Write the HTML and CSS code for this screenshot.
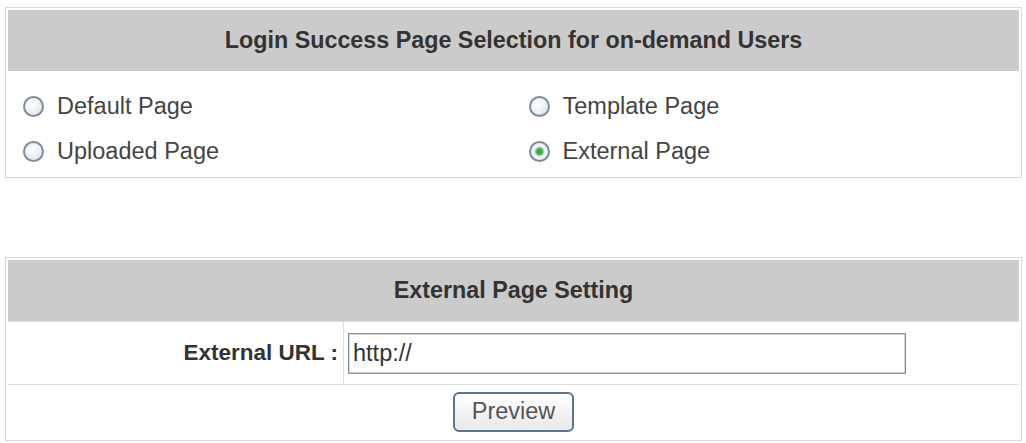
FILE: index.html
```html
<!DOCTYPE html>
<html>
<head>
    <title>Login Success Page</title>
    <link rel="stylesheet" href="styles.css">
</head>
<body>
    <div class="page">
        <div class="panel">
            <div class="panel-head">Login Success Page Selection for on-demand Users</div>
            <div class="choice-grid">
                <label class="choice"><input type="radio" name="successPage" class="radio">Default Page</label>
                <label class="choice"><input type="radio" name="successPage" class="radio">Template Page</label>
                <label class="choice"><input type="radio" name="successPage" class="radio">Uploaded Page</label>
                <label class="choice"><input type="radio" name="successPage" class="radio" checked>External Page</label>
            </div>
        </div>

        <div class="panel panel-gap">
            <div class="panel-head">External Page Setting</div>
            <div class="field-row">
                <label class="field-label" for="externalUrl">External URL :</label>
                <div class="field-value">
                    <input type="text" id="externalUrl" class="url-input" value="http://">
                </div>
            </div>
            <div class="button-row">
                <button type="button" class="btn">Preview</button>
            </div>
        </div>
    </div>
</body>
</html>
```

FILE: styles.css
```css
body {
    margin: 0;
    background: #ffffff;
    font-family: "Liberation Sans", Arial, sans-serif;
    color: #333333;
}
.page {
    width: 1017px;
    padding: 7px 0 0 5px;
}
.panel {
    border: 1px solid #d8d8d8;
    padding: 2px;
}
.panel-gap {
    margin-top: 79px;
}
.panel-head {
    height: 61px;
    display: flex;
    align-items: center;
    justify-content: center;
    background-color: #cbcbcb;
    font-size: 23.3px;
    font-weight: bold;
    color: #333333;
}
.choice-grid {
    display: grid;
    grid-template-columns: 1fr 1fr;
    grid-auto-rows: 45px;
    padding-top: 13px;
    padding-bottom: 1px;
}
.choice {
    display: flex;
    align-items: center;
    padding-left: 15px;
    font-size: 23.5px;
    color: #444444;
}
.radio {
    appearance: none;
    -webkit-appearance: none;
    width: 21px;
    height: 21px;
    margin: 0 13px 0 0;
    box-sizing: border-box;
    border: 2px solid #7d8c9b;
    border-radius: 50%;
    background: radial-gradient(circle at 40% 40%, #ffffff 0, #e9edf1 60%, #d3dae2 100%);
}
.radio:checked {
    background: radial-gradient(circle, #2f9e3a 0, #46b64f 3px, #b9e0bb 4.5px, #f3f5f7 5.5px, #dde3ea 100%);
}
.field-row {
    display: flex;
    height: 62px;
    border-top: 1px solid #dedede;
}
.field-label {
    width: 336px;
    box-sizing: border-box;
    display: flex;
    align-items: center;
    justify-content: flex-end;
    padding-right: 5px;
    border-right: 1px solid #dedede;
    font-size: 22.5px;
    font-weight: bold;
}
.field-value {
    display: flex;
    align-items: center;
    padding-left: 4px;
}
.url-input {
    width: 558px;
    height: 41px;
    box-sizing: border-box;
    padding: 0 4px;
    border: 1px solid #7a93ab;
    box-shadow: inset 0 0 0 1px #c9d4df;
    font-family: "Liberation Sans", Arial, sans-serif;
    font-size: 23.5px;
    color: #333333;
}
.button-row {
    display: flex;
    align-items: center;
    justify-content: center;
    height: 53px;
    border-top: 1px solid #dedede;
}
.btn {
    width: 121px;
    height: 40px;
    border: 2px solid #5a7590;
    border-radius: 6px;
    background: linear-gradient(#ffffff, #e8e8e8);
    font-family: "Liberation Sans", Arial, sans-serif;
    font-size: 23.5px;
    color: #555555;
    padding: 0;
    cursor: pointer;
}
```
